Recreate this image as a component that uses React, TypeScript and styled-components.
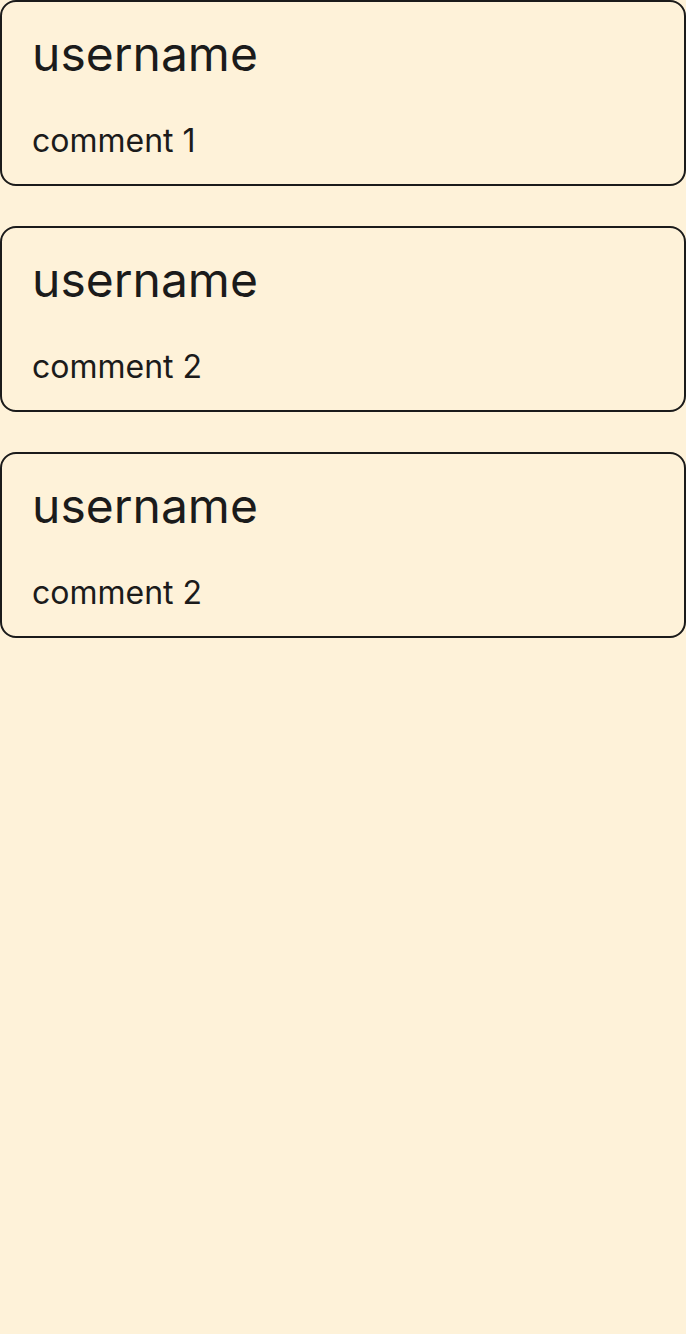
import styled, { createGlobalStyle } from "styled-components";

const GlobalStyle = createGlobalStyle`
  html, body {
    margin: 0;
    padding: 0;
    background: #fef2d9;
    font-family: Inter, "Noto Sans", sans-serif;
    color: #1b1b1b;
  }
`;

const comments = [
  { id: 1, username: "username", text: "comment 1" },
  { id: 2, username: "username", text: "comment 2" },
  { id: 3, username: "username", text: "comment 2" },
];

export default function App() {
  return (
    <>
      <GlobalStyle />
      <List>
        {comments.map(c => (
          <Card key={c.id}>
            <Username>{c.username}</Username>
            <Text>{c.text}</Text>
          </Card>
        ))}
      </List>
    </>
  );
}

const List = styled.div`
  display: flex;
  flex-direction: column;
  gap: 40px;
`;

const Card = styled.div`
  box-sizing: border-box;
  height: 186px;
  padding: 22px 30px 0;
  border: 2px solid #1b1b1b;
  border-radius: 16px;
`;

const Username = styled.h2`
  margin: 0;
  font-size: 48px;
  font-weight: 400;
  line-height: 60px;
`;

const Text = styled.p`
  margin: 39px 0 0;
  font-size: 32px;
  line-height: 36px;
`;
